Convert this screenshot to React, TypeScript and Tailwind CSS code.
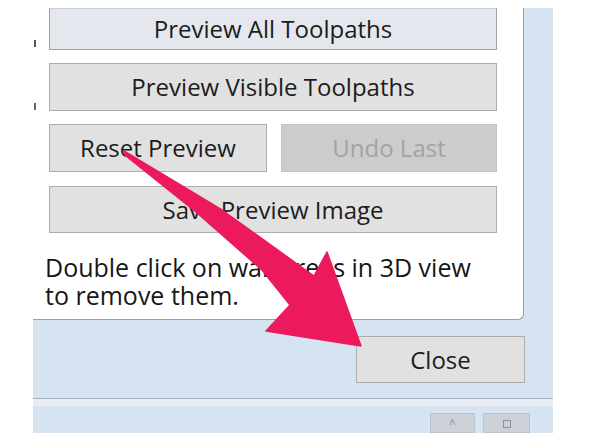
const font = { fontFamily: '"Open Sans", "Noto Sans", sans-serif' }

function Btn({ label, className = '', disabled = false }: { label: string; className?: string; disabled?: boolean }) {
  return (
    <div
      className={`flex items-center justify-center border text-[24px] leading-none ${
        disabled ? 'bg-[#cccccc] border-[#c4c4c4] text-[#a3a3a3]' : 'bg-[#e1e1e1] border-[#adadad] text-[#1c1c1c]'
      } ${className}`}
    >
      {label}
    </div>
  )
}

export default function App() {
  return (
    <div className="relative w-[592px] h-[444px] bg-white overflow-hidden" style={font}>
      <div className="pt-[8px] pl-[33px]">
        <div className="w-[520px] h-[425px] bg-[#d6e3f1] flex flex-col">
          <div className="flex">
            {/* panneau blanc */}
            <div className="relative w-[491px] h-[312px] bg-white border-r border-b border-[#98a2ad] rounded-br-[6px] pl-[16px] flex flex-col">
              <span className="absolute left-[1px] top-[32px] w-[2px] h-[7px] bg-[#555]" />
              <span className="absolute left-[1px] top-[95px] w-[2px] h-[7px] bg-[#666]" />
              <Btn label="Preview All Toolpaths" className="w-[448px] h-[42px] bg-[#e4e8ee]! border-[#9aa3ad]! border-t-[#c9d0d8]!" />
              <Btn label="Preview Visible Toolpaths" className="w-[448px] h-[48px] mt-[13px]" />
              <div className="flex gap-[14px] mt-[13px]">
                <Btn label="Reset Preview" className="w-[218px] h-[48px]" />
                <Btn label="Undo Last" disabled className="w-[216px] h-[48px]" />
              </div>
              <Btn label="Save Preview Image" className="w-[448px] h-[47px] mt-[14px]" />
              <p className="text-[25px] leading-[28px] text-[#161616] -ml-[4px] mt-[20px] whitespace-nowrap">
                Double click on wall areas in 3D view
                <br />
                to remove them.
              </p>
            </div>
          </div>
          <div className="flex justify-end pr-[28px] pt-[16px]">
            <Btn label="Close" className="w-[169px] h-[47px]" />
          </div>
          <div className="mt-[15px] border-t border-[#a3b1c0] h-[11px] bg-[#e8eef3]" />
          <div className="flex-1 flex justify-end gap-[8px] pr-[23px] pt-[7px]">
            <div className="w-[45px] h-[20px] bg-[#ccd1d7] border border-[#bcc3cb] flex justify-center text-[12px] text-[#8a9099] leading-none pt-[4px]">^</div>
            <div className="w-[47px] h-[20px] bg-[#ccd1d7] border border-[#bcc3cb] flex justify-center pt-[6px]">
              <span className="w-[8px] h-[8px] border border-[#8a9099]" />
            </div>
          </div>
        </div>
      </div>

      {/* flèche */}
      <svg className="absolute left-0 top-0 pointer-events-none" width="592" height="444" viewBox="0 0 592 444">
        <polygon
          points="124,151 222,210 300,266 314,276 327,252 361,346 266,331 290,305 262,270 196,212 126,156"
          fill="#ec1a5c"
          strokeLinejoin="round"
          stroke="#ec1a5c"
          strokeWidth="1.5"
        />
      </svg>
    </div>
  )
}
